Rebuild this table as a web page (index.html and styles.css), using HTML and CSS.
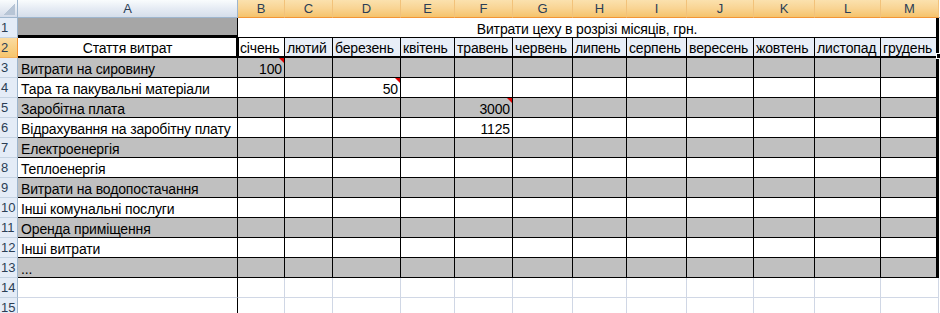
FILE: index.html
```html
<!DOCTYPE html>
<html lang="uk">
<head>
<meta charset="utf-8">
<title>Витрати цеху</title>
<link rel="stylesheet" href="styles.css">
</head>
<body>
<div class="sheet">
  <!-- header row -->
  <div class="corner"></div>
  <div class="ch">A</div>
  <div class="ch sel">B</div>
  <div class="ch sel">C</div>
  <div class="ch sel">D</div>
  <div class="ch sel">E</div>
  <div class="ch sel">F</div>
  <div class="ch sel">G</div>
  <div class="ch sel">H</div>
  <div class="ch sel">I</div>
  <div class="ch sel">J</div>
  <div class="ch sel">K</div>
  <div class="ch sel">L</div>
  <div class="ch sel last">M</div>
  <div class="fill-h"></div>

  <!-- row 1 -->
  <div class="rh">1</div>
  <div class="c b dk a1"></div>
  <div class="c b title last">Витрати цеху в розрізі місяців, грн.</div>
  <div class="fill"></div>

  <!-- row 2 -->
  <div class="rh rsel">2</div>
  <div class="c b r2 a2 center">Стаття витрат</div>
  <div class="c b r2 act"><span class="selection"><span class="handle"></span></span>січень</div>
  <div class="c b r2 tint">лютий</div>
  <div class="c b r2 tint">березень</div>
  <div class="c b r2 tint">квітень</div>
  <div class="c b r2 tint">травень</div>
  <div class="c b r2 tint">червень</div>
  <div class="c b r2 tint">липень</div>
  <div class="c b r2 tint">серпень</div>
  <div class="c b r2 tint">вересень</div>
  <div class="c b r2 tint">жовтень</div>
  <div class="c b r2 tint">листопад</div>
  <div class="c b r2 tint last">грудень</div>
  <div class="fill"></div>

  <!-- row 3 -->
  <div class="rh">3</div>
  <div class="c b g">Витрати на сировину</div>
  <div class="c b g n cm">100</div>
  <div class="c b g"></div><div class="c b g"></div><div class="c b g"></div><div class="c b g"></div><div class="c b g"></div>
  <div class="c b g"></div><div class="c b g"></div><div class="c b g"></div><div class="c b g"></div><div class="c b g"></div>
  <div class="c b g last"></div>
  <div class="fill"></div>

  <!-- row 4 -->
  <div class="rh">4</div>
  <div class="c b">Тара та пакувальні матеріали</div>
  <div class="c b"></div><div class="c b"></div>
  <div class="c b n cm">50</div>
  <div class="c b"></div><div class="c b"></div><div class="c b"></div><div class="c b"></div><div class="c b"></div>
  <div class="c b"></div><div class="c b"></div><div class="c b"></div>
  <div class="c b last"></div>
  <div class="fill"></div>

  <!-- row 5 -->
  <div class="rh">5</div>
  <div class="c b g">Заробітна плата</div>
  <div class="c b g"></div><div class="c b g"></div><div class="c b g"></div><div class="c b g"></div>
  <div class="c b g n cm">3000</div>
  <div class="c b g"></div><div class="c b g"></div><div class="c b g"></div><div class="c b g"></div><div class="c b g"></div><div class="c b g"></div>
  <div class="c b g last"></div>
  <div class="fill"></div>

  <!-- row 6 -->
  <div class="rh">6</div>
  <div class="c b">Відрахування на заробітну плату</div>
  <div class="c b"></div><div class="c b"></div><div class="c b"></div><div class="c b"></div>
  <div class="c b n">1125</div>
  <div class="c b"></div><div class="c b"></div><div class="c b"></div><div class="c b"></div><div class="c b"></div><div class="c b"></div>
  <div class="c b last"></div>
  <div class="fill"></div>

  <!-- row 7 -->
  <div class="rh">7</div>
  <div class="c b g">Електроенергія</div>
  <div class="c b g"></div><div class="c b g"></div><div class="c b g"></div><div class="c b g"></div><div class="c b g"></div><div class="c b g"></div>
  <div class="c b g"></div><div class="c b g"></div><div class="c b g"></div><div class="c b g"></div><div class="c b g"></div>
  <div class="c b g last"></div>
  <div class="fill"></div>

  <!-- row 8 -->
  <div class="rh">8</div>
  <div class="c b">Теплоенергія</div>
  <div class="c b"></div><div class="c b"></div><div class="c b"></div><div class="c b"></div><div class="c b"></div><div class="c b"></div>
  <div class="c b"></div><div class="c b"></div><div class="c b"></div><div class="c b"></div><div class="c b"></div>
  <div class="c b last"></div>
  <div class="fill"></div>

  <!-- row 9 -->
  <div class="rh">9</div>
  <div class="c b g">Витрати на водопостачання</div>
  <div class="c b g"></div><div class="c b g"></div><div class="c b g"></div><div class="c b g"></div><div class="c b g"></div><div class="c b g"></div>
  <div class="c b g"></div><div class="c b g"></div><div class="c b g"></div><div class="c b g"></div><div class="c b g"></div>
  <div class="c b g last"></div>
  <div class="fill"></div>

  <!-- row 10 -->
  <div class="rh">10</div>
  <div class="c b">Інші комунальні послуги</div>
  <div class="c b"></div><div class="c b"></div><div class="c b"></div><div class="c b"></div><div class="c b"></div><div class="c b"></div>
  <div class="c b"></div><div class="c b"></div><div class="c b"></div><div class="c b"></div><div class="c b"></div>
  <div class="c b last"></div>
  <div class="fill"></div>

  <!-- row 11 -->
  <div class="rh">11</div>
  <div class="c b g">Оренда приміщення</div>
  <div class="c b g"></div><div class="c b g"></div><div class="c b g"></div><div class="c b g"></div><div class="c b g"></div><div class="c b g"></div>
  <div class="c b g"></div><div class="c b g"></div><div class="c b g"></div><div class="c b g"></div><div class="c b g"></div>
  <div class="c b g last"></div>
  <div class="fill"></div>

  <!-- row 12 -->
  <div class="rh">12</div>
  <div class="c b">Інші витрати</div>
  <div class="c b"></div><div class="c b"></div><div class="c b"></div><div class="c b"></div><div class="c b"></div><div class="c b"></div>
  <div class="c b"></div><div class="c b"></div><div class="c b"></div><div class="c b"></div><div class="c b"></div>
  <div class="c b last"></div>
  <div class="fill"></div>

  <!-- row 13 -->
  <div class="rh">13</div>
  <div class="c b g">...</div>
  <div class="c b g"></div><div class="c b g"></div><div class="c b g"></div><div class="c b g"></div><div class="c b g"></div><div class="c b g"></div>
  <div class="c b g"></div><div class="c b g"></div><div class="c b g"></div><div class="c b g"></div><div class="c b g"></div>
  <div class="c b g last"></div>
  <div class="fill"></div>

  <!-- row 14 -->
  <div class="rh">14</div>
  <div class="c ar"></div>
  <div class="c"></div><div class="c"></div><div class="c"></div><div class="c"></div><div class="c"></div><div class="c"></div>
  <div class="c"></div><div class="c"></div><div class="c"></div><div class="c"></div><div class="c"></div><div class="c"></div>
  <div class="fill"></div>

  <!-- row 15 -->
  <div class="rh">15</div>
  <div class="c ar"></div>
  <div class="c"></div><div class="c"></div><div class="c"></div><div class="c"></div><div class="c"></div><div class="c"></div>
  <div class="c"></div><div class="c"></div><div class="c"></div><div class="c"></div><div class="c"></div><div class="c"></div>
  <div class="fill"></div>
</div>
</body>
</html>
```
FILE: styles.css
```css
html, body {
  margin: 0;
  padding: 0;
  background: #ffffff;
  overflow: hidden;
}

body {
  font-family: "Liberation Sans", Arial, sans-serif;
  color: #000000;
}

.sheet {
  display: grid;
  grid-template-columns: 18px 220px 47px 48px 68px 54px 58px 60px 54px 60px 67px 61px 66px 58px 1fr;
  grid-template-rows: 18px repeat(15, 20px);
  width: 940px;
  font-size: 14px;
}

/* column headers */
.corner {
  box-sizing: border-box;
  border-right: 1px solid #9eb6ce;
  border-bottom: 1px solid #9eb6ce;
  background:
    linear-gradient(135deg, transparent 50%, #b7c5d6 50%) right 2px bottom 2px / 11px 11px no-repeat,
    linear-gradient(#f9fcfd, #d3dbe9);
}

.ch {
  box-sizing: border-box;
  border-right: 1px solid #9eb6ce;
  border-bottom: 1px solid #9eb6ce;
  background: linear-gradient(#f9fcfd 0%, #e4eaf3 55%, #d5deea 100%);
  text-align: center;
  font-size: 13px;
  line-height: 17px;
  color: #2b3e55;
}

.ch.sel {
  background: linear-gradient(#fbe1ae 0%, #f9d493 50%, #f5c36b 100%);
  border-right-color: #f2c27a;
  border-bottom-color: #f29536;
}

.fill-h {
  border-bottom: 1px solid #9eb6ce;
}

/* row headers */
.rh {
  box-sizing: border-box;
  border-right: 1px solid #9eb6ce;
  border-bottom: 1px solid #c5d3e2;
  background: #e4ecf7;
  font-size: 13px;
  line-height: 20px;
  padding-left: 1px;
  color: #2b3e55;
  white-space: nowrap;
  overflow: hidden;
}

.rh.rsel {
  background: linear-gradient(#fbdba0, #f6c66e);
  border-right-color: #f29536;
  border-bottom-color: #f2b15f;
}

/* cells */
.c {
  box-sizing: border-box;
  border-right: 1px solid #d0d7e5;
  border-bottom: 1px solid #d0d7e5;
  padding: 1px 3px 0 3px;
  line-height: 20px;
  white-space: nowrap;
  overflow: hidden;
  position: relative;
  letter-spacing: -0.15px;
}

.c.b {
  border-right-color: #000000;
  border-bottom-color: #000000;
}

.c.ar {
  border-right-color: #000000;
}

.c.last {
  border-right-width: 3px;
}

.c.g {
  background: #c0c0c0;
}

.c.dk {
  background: #a6a6a6;
}

.c.a1 {
  border-bottom-width: 3px;
}

.c.title {
  grid-column: span 12;
  text-align: center;
  padding: 1px 0 0 0;
}

.c.r2 {
  border-bottom-width: 2px;
  line-height: 19px;
  padding: 1px 2px 0 2px;
}

.c.tint {
  background: #e8eef7;
}

.c.center {
  text-align: center;
}

.c.n {
  text-align: right;
  padding-right: 2px;
}

.c.cm::after {
  content: "";
  position: absolute;
  top: 0;
  right: 0;
  width: 0;
  height: 0;
  border-top: 5px solid #e00000;
  border-left: 5px solid transparent;
}

/* active cell B2 carries the selection outline for B2:M2 */
.c.act {
  overflow: visible;
  z-index: 2;
}

.selection {
  position: absolute;
  left: -2px;
  top: 0;
  width: 703px;
  height: 18px;
  border-left: 3px solid #000000;
  box-sizing: border-box;
  pointer-events: none;
}

.handle {
  position: absolute;
  right: -3px;
  bottom: -3px;
  width: 4px;
  height: 4px;
  background: #000000;
  border: 1px solid #ffffff;
}
```
